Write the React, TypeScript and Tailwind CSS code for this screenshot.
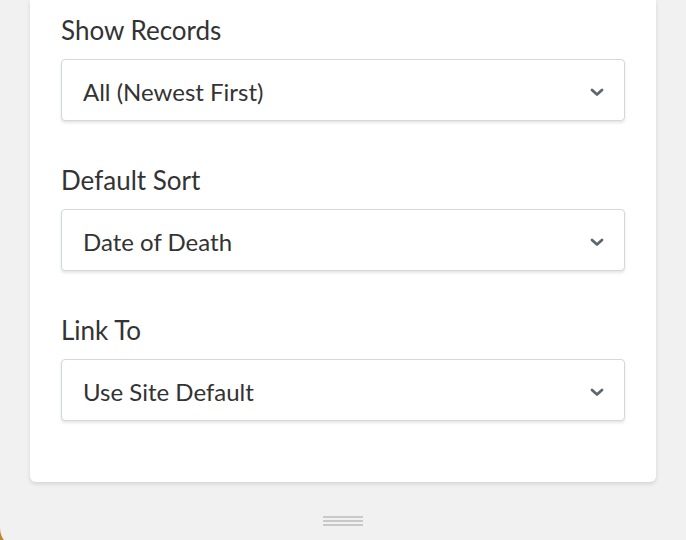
import React from "react";

const fields = [
  { label: "Show Records", value: "All (Newest First)" },
  { label: "Default Sort", value: "Date of Death" },
  { label: "Link To", value: "Use Site Default" },
];

function Chevron() {
  return (
    <svg width="14" height="9" viewBox="0 0 14 9" className="shrink-0">
      <path d="M2 2 L7 6.5 L12 2" fill="none" stroke="#5d676f" strokeWidth="2.8" strokeLinecap="round" strokeLinejoin="round" />
    </svg>
  );
}

export default function App() {
  return (
    <div className="h-[540px] w-[686px] overflow-hidden bg-[#c4862c]" style={{ fontFamily: "Lato, 'Liberation Sans', sans-serif" }}>
      <div className="flex h-[548px] flex-col rounded-bl-[20px] bg-[#f1f1f1] pl-[30px] pr-[30px]">
        <div className="flex flex-col gap-[44px] rounded-b-[6px] bg-white pb-[61px] pl-[31px] pr-[31px] pt-[15px] shadow-[0_2px_4px_rgba(0,0,0,0.12)]">
          {fields.map((f) => (
            <div key={f.label} className="flex flex-col gap-[14px]">
              <div className="text-[26px] leading-[30px] text-[#333]">{f.label}</div>
              <div className="flex h-[62px] items-center justify-between rounded-[4px] border border-[#d3d8db] bg-white pl-[21px] pr-[20px] pt-[4px] shadow-[0_2px_3px_rgba(0,0,0,0.1)]">
                <span className="text-[24px] text-[#333]">{f.value}</span>
                <Chevron />
              </div>
            </div>
          ))}
        </div>
        <div className="flex justify-center pt-[34px]">
          <div className="flex w-[40px] flex-col gap-[2px]">
            <div className="h-[2px] bg-[#c9c9c9]" />
            <div className="h-[2px] bg-[#c9c9c9]" />
            <div className="h-[2px] bg-[#c9c9c9]" />
          </div>
        </div>
      </div>
    </div>
  );
}
